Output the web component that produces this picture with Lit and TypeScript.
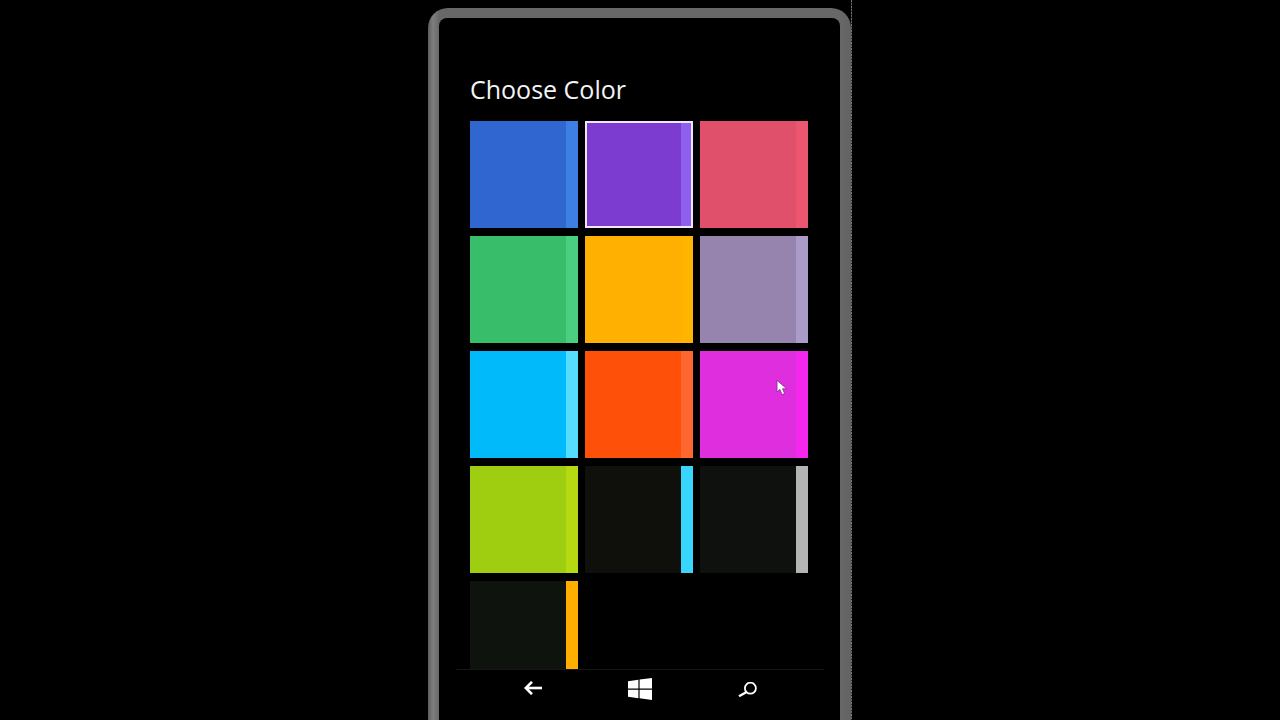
import { LitElement, html, css } from "lit";
import { customElement } from "lit/decorators.js";

const TILES: { bg: string; strip: string; selected?: boolean }[] = [
  { bg: "#2f66cf", strip: "#3d7fe3" },
  { bg: "#7b3ccf", strip: "#8f5ff0", selected: true },
  { bg: "#e0506a", strip: "#ec566f" },
  { bg: "#38bd6b", strip: "#48d080" },
  { bg: "#ffb000", strip: "#ffb400" },
  { bg: "#9784ae", strip: "#aa9bc8" },
  { bg: "#00baf9", strip: "#55dcff" },
  { bg: "#ff5009", strip: "#ff6730" },
  { bg: "#df2ede", strip: "#f526ee" },
  { bg: "#9fcd0f", strip: "#b6da12" },
  { bg: "#0f100c", strip: "#38d6ff" },
  { bg: "#0e110e", strip: "#b4b4b4" },
  { bg: "#0f130e", strip: "#ffae00" },
];

@customElement("app-root")
export class AppRoot extends LitElement {
  static styles = css`
    :host {
      display: block;
      width: 1280px;
      height: 720px;
      background: #000;
      overflow: hidden;
      font-family: "Open Sans", "Liberation Sans", sans-serif;
      color: #fff;
    }
    .stage {
      display: flex;
      height: 720px;
      padding-left: 428px;
    }
    .phone {
      position: relative;
      box-sizing: border-box;
      width: 423px;
      height: 712px;
      margin-top: 8px;
      padding: 10px 11px 0;
      border-radius: 20px 20px 0 0;
      background: linear-gradient(
        90deg,
        #5e5e5e 0,
        #7e7e7e 5px,
        #686868 11px,
        #686868 412px,
        #626262 423px
      );
    }
    .screen {
      height: 702px;
      background: #000;
      border-radius: 8px 8px 0 0;
      display: flex;
      flex-direction: column;
    }
    .seam {
      width: 1px;
      height: 720px;
      background: repeating-linear-gradient(180deg, #777 0 2px, #333 2px 3px, #666 3px 5px, #222 5px 6px);
    }
    .title {
      font-size: 25px;
      line-height: 32px;
      height: 32px;
      margin: 55px 0 16px 31px;
      color: #f4f4f4;
    }
    .scroll {
      height: 548px;
      flex: none;
      overflow: hidden;
      padding-left: 31px;
    }
    .grid {
      display: grid;
      grid-template-columns: repeat(3, 108px);
      grid-auto-rows: 107px;
      column-gap: 7px;
      row-gap: 8px;
    }
    .tile {
      box-sizing: border-box;
      display: flex;
      justify-content: flex-end;
    }
    .tile.selected {
      border: 2px solid #efe6fb;
    }
    .strip {
      width: 12px;
      height: 100%;
    }
    .tile.selected .strip {
      width: 10px;
    }
    .nav {
      border-top: 1px solid #15151a;
      height: 38px;
      margin: 0 16px 0 17px;
      display: grid;
      grid-template-columns: repeat(3, 107px);
      justify-content: center;
      align-items: center;
      justify-items: center;
    }
    .nav svg { display: block; }
    .nav .b { margin-bottom: 2px; }
    .nav .s { margin-top: 1px; }
    .cursor {
      position: absolute;
      left: 348px;
      top: 371px;
    }
  `;

  render() {
    return html`
      <div class="stage">
        <div class="phone">
          <div class="screen">
            <div class="title">Choose Color</div>
            <div class="scroll">
              <div class="grid">
                ${TILES.map(
                  (t) => html`<div class="tile ${t.selected ? "selected" : ""}" style="background:${t.bg}">
                    <div class="strip" style="background:${t.strip}"></div>
                  </div>`
                )}
              </div>
            </div>
            <div class="nav">
              <svg class="b" width="18" height="14" viewBox="0 0 18 14" fill="none" stroke="#fff" stroke-width="2.6">
                <path d="M18 7H3" />
                <path d="M8 0.8 1.8 7l6.2 6.2" />
              </svg>
              <svg class="w" width="24" height="22" viewBox="0 0 24 22" fill="#fff">
                <path d="M0 3.2 10.4 1.8v8.7H0zM11.6 1.6 24 0v10.5H11.6zM0 11.7h10.4v8.6L0 18.8zM11.6 11.7H24V22l-12.4-1.7z" />
              </svg>
              <svg class="s" width="19" height="15" viewBox="0 0 19 15" fill="none" stroke="#fff">
                <circle cx="12.4" cy="6.2" r="5.5" stroke-width="1.8" />
                <path d="M8.2 10.2 1 14.2" stroke-width="2.4" />
              </svg>
            </div>
          </div>
          <svg class="cursor" width="12" height="17" viewBox="0 0 11 15">
            <path d="M1 1v10.5l2.6-2.3L5.6 14l2.2-1-1.9-4.4H9.6z" fill="#fff" stroke="#6a2a78" stroke-width="0.6" />
          </svg>
        </div>
        <div class="seam"></div>
      </div>
    `;
  }
}
